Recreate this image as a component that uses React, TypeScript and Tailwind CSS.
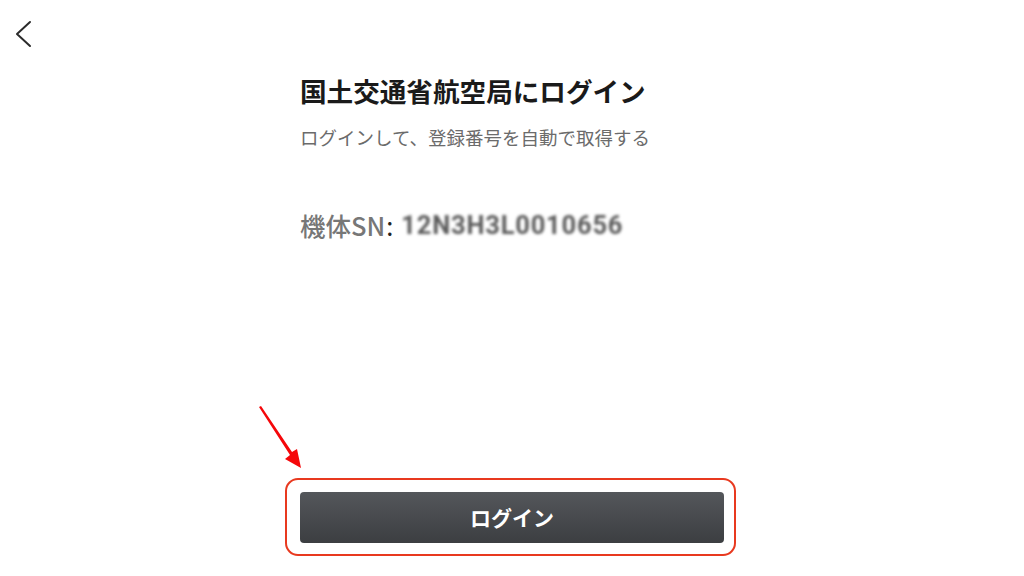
import React from "react";

const jp = { fontFamily: '"Noto Sans CJK JP", "Noto Sans", sans-serif' };

function BackButton() {
  return (
    <button className="ml-[14px] mt-[20px] flex h-[28px] w-[20px] items-center justify-center">
      <svg width="18" height="28" viewBox="0 0 18 28" fill="none">
        <polyline
          points="15,2 2,14 15,26"
          stroke="#2b2b2b"
          strokeWidth="2"
          strokeLinecap="round"
          strokeLinejoin="round"
        />
      </svg>
    </button>
  );
}

export default function App() {
  return (
    <div className="relative flex h-[576px] w-full flex-col bg-white" style={jp}>
      <header className="h-[58px] shrink-0">
        <BackButton />
      </header>

      <main className="mx-auto flex w-[424px] flex-1 flex-col pt-[15px] pb-[33px]">
        <h1 className="text-[26.6px] font-bold leading-[36px] text-[#1a1a1a]">
          国土交通省航空局にログイン
        </h1>
        <p className="mt-[14px] text-[18.5px] leading-[28px] text-[#6b6b6b]">
          ログインして、登録番号を自動で取得する
        </p>

        <div className="mt-[58px] flex items-center text-[25.5px] leading-[32px]">
          <span className="font-medium text-[#777777]">機体SN</span>
          <span className="ml-[1px] text-[#222]">:</span>
          <span
            className="ml-[8px] font-bold tracking-[0.8px] text-[#5a5a5a] blur-[1.4px]"
            style={{ fontFamily: "Roboto, sans-serif" }}
          >
            12N3H3L0010656
          </span>
        </div>

        <div className="relative mt-auto">
          <div className="pointer-events-none absolute -top-[14px] -bottom-[13px] -left-[15px] -right-[12px] rounded-[13px] border-[2px] border-[#e8391f]" />
          <button className="flex h-[51px] w-full items-center justify-center rounded-[4px] bg-gradient-to-b from-[#54575b] to-[#3c3e41] text-[21px] font-bold text-white">
            ログイン
          </button>
        </div>
      </main>

      <svg
        className="pointer-events-none absolute left-[255px] top-[404px]"
        width="50"
        height="68"
        viewBox="0 0 50 68"
      >
        <polygon points="4,3 6,2 37,48 42,45 46,64 30,55 35,51" fill="#f5070a" />
      </svg>
    </div>
  );
}
